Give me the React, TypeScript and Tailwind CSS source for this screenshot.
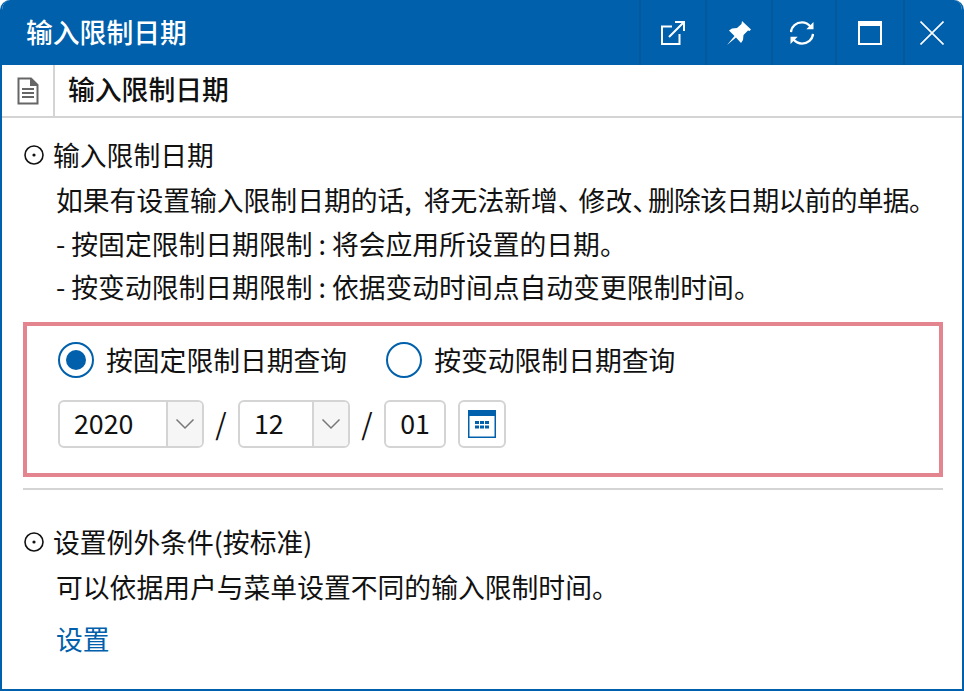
const font = { fontFamily: '"Noto Sans CJK SC", "Noto Sans", sans-serif' }

function Bullet() {
  return (
    <svg width="22" height="22" viewBox="0 0 22 22" fill="none" className="shrink-0">
      <circle cx="11" cy="11" r="9" stroke="#111" strokeWidth="1.6" />
      <circle cx="11" cy="11" r="1.6" fill="#111" />
    </svg>
  )
}

function HeaderButton({ children, className }: { children: React.ReactNode; className: string }) {
  return (
    <div className={`flex h-full items-center justify-center border-l-2 border-[#04599c] ${className}`}>{children}</div>
  )
}

function Radio({ checked, label }: { checked?: boolean; label: string }) {
  return (
    <div className="flex items-center gap-[12px]">
      <span className="flex h-[36px] w-[36px] items-center justify-center rounded-full border-2 border-[#0060ab] bg-white">
        {checked && <span className="h-[20px] w-[20px] rounded-full bg-[#0060ab]" />}
      </span>
      <span>{label}</span>
    </div>
  )
}

function Chevron() {
  return (
    <svg width="20" height="12" viewBox="0 0 20 12" fill="none">
      <path d="M1.5 1.5 L10 10 L18.5 1.5" stroke="#777" strokeWidth="1.5" />
    </svg>
  )
}

function SelectBox({ value, width }: { value: string; width: string }) {
  return (
    <div className={`flex h-[48px] items-stretch overflow-hidden rounded-[6px] border-2 border-[#d4d4d4] ${width}`}>
      <span className="flex flex-1 items-center pb-[2px] pl-[14px]">{value}</span>
      <span className="flex w-[36px] items-center justify-center border-l-2 border-[#d4d4d4] bg-[#f6f6f6]">
        <Chevron />
      </span>
    </div>
  )
}

export default function App() {
  return (
    <div
      style={font}
      className="flex h-[691px] w-[964px] flex-col overflow-hidden rounded-t-[10px] border-x-2 border-b-2 border-[#0060ab] bg-white text-[26.8px] text-[#111]"
    >
      <div className="flex h-[65px] shrink-0 items-center justify-between bg-[#0060ab] pl-[24px] text-white">
        <span className="pb-[1px] font-medium">输入限制日期</span>
        <div className="flex h-full">
          <HeaderButton className="w-[66px]">
            <svg width="24" height="24" viewBox="0 0 24 24" fill="none" stroke="#fff" strokeWidth="2">
              <path d="M11 5.5 H1 V23 H18.5 V13" />
              <path d="M8 16 L22.5 1.5 M14 1 H23 V10" />
            </svg>
          </HeaderButton>
          <HeaderButton className="w-[66px]">
            <svg width="24" height="24" viewBox="0 0 24 24" fill="#fff">
              <path d="M15 0 L24 8.5 L22.5 10 L21 9.5 L16.5 14 L16 19 L14 22 L9 16.5 L0 24 L7.5 15 L2 9.5 L5 7.5 L10 7 L14.5 3 Z" />
            </svg>
          </HeaderButton>
          <HeaderButton className="w-[64px] pr-[4px]">
            <svg width="24" height="24" viewBox="1.5 1.5 25 25" fill="none" stroke="#fff" strokeWidth="2.4">
              <path d="M2.5 13 C3 7 8 3 14 3 C18 3 21 5 23.5 8" />
              <path d="M25.5 15 C25 21 20 25 14 25 C10 25 7 23 4.5 20" />
              <path d="M26 2.5 V10 H18.5 Z" fill="#fff" stroke="none" />
              <path d="M2 25.5 V18 H9.5 Z" fill="#fff" stroke="none" />
            </svg>
          </HeaderButton>
          <HeaderButton className="w-[68px]">
            <span className="h-[24px] w-[24px] border-2 border-t-[5px] border-white" />
          </HeaderButton>
          <HeaderButton className="w-[59px] pr-[3px]">
            <svg width="24" height="24" viewBox="0 0 24 24" fill="none" stroke="#fff" strokeWidth="1.6">
              <path d="M0.5 0.5 L23.5 23.5 M23.5 0.5 L0.5 23.5" />
            </svg>
          </HeaderButton>
        </div>
      </div>

      <div className="flex h-[53px] shrink-0 items-stretch border-b-2 border-[#d4d4d4]">
        <div className="flex w-[53px] items-center justify-center border-r-2 border-[#d4d4d4]">
          <svg width="22" height="28" viewBox="0 0 22 28" fill="none" stroke="#666" strokeWidth="2">
            <path d="M1.5 1.5 H14 L20.5 8 V26.5 H1.5 Z" />
            <path d="M14 1.5 V8 H20.5" fill="#666" />
            <path d="M5 12 H17 M5 16 H17 M5 20 H17" />
          </svg>
        </div>
        <span className="flex items-center pb-[2px] pl-[13px] font-medium">输入限制日期</span>
      </div>

      <div className="flex flex-1 flex-col pl-[21px] pr-[19px] pt-[15px]">
        <div className="flex h-[44px] items-center gap-[8px]">
          <Bullet />
          <span>输入限制日期</span>
        </div>
        <div className="mt-px flex flex-col pl-[33px] leading-[44px]">
          <span className="whitespace-nowrap">
            如果有设置输入限制日期的话,<span className="ml-[6px]"> 将无法新增</span>
            <span className="tracking-[-6px]">、</span>
            修改
            <span className="tracking-[-11px]">、</span>
            <span className="tracking-[-0.7px]">删除该日期以前的单据。</span>
          </span>
          <span className="whitespace-nowrap">- 按固定限制日期限制 : 将会应用所设置的日期。</span>
          <span className="-mt-px whitespace-nowrap">- 按变动限制日期限制 : 依据变动时间点自动变更限制时间。</span>
        </div>

        <div className="mt-[13px] flex h-[155px] flex-col gap-[20px] border-4 border-[#e3848f] pl-[31px] pt-[14px]">
          <div className="flex items-center gap-[39px]">
            <Radio checked label="按固定限制日期查询" />
            <Radio label="按变动限制日期查询" />
          </div>
          <div className="flex items-center">
            <SelectBox value="2020" width="w-[146px]" />
            <span className="w-[34px] pb-[2px] text-center text-[29px]">/</span>
            <SelectBox value="12" width="w-[112px]" />
            <span className="w-[34px] pb-[2px] text-center text-[29px]">/</span>
            <span className="flex h-[48px] w-[62px] items-center justify-center rounded-[6px] border-2 border-[#d4d4d4] pb-[2px]">
              01
            </span>
            <span className="ml-[12px] flex h-[48px] w-[48px] items-center justify-center rounded-[6px] border-2 border-[#d4d4d4]">
              <svg width="28" height="28" viewBox="0 0 28 28" fill="none">
                <rect x="0.75" y="0.75" width="26.5" height="26.5" stroke="#0060ab" strokeWidth="1.5" />
                <rect x="0" y="0" width="28" height="6" fill="#0060ab" />
                <path d="M7 11h4v3H7zM12 11h4v3h-4zM17 11h4v3h-4zM7 15.5h4v3H7zM12 15.5h4v3h-4zM17 15.5h4v3h-4z" fill="#0060ab" />
              </svg>
            </span>
          </div>
        </div>

        <div className="mt-[11px] h-[2px] bg-[#d4d4d4]" />

        <div className="mt-[30px] flex h-[44px] items-center gap-[8px]">
          <Bullet />
          <span>设置例外条件(按标准)</span>
        </div>
        <div className="-mt-px flex flex-col pl-[33px] leading-[48px]">
          <span>可以依据用户与菜单设置不同的输入限制时间。</span>
          <span className="mt-[4px] text-[#0060ab]">设置</span>
        </div>
      </div>
    </div>
  )
}
